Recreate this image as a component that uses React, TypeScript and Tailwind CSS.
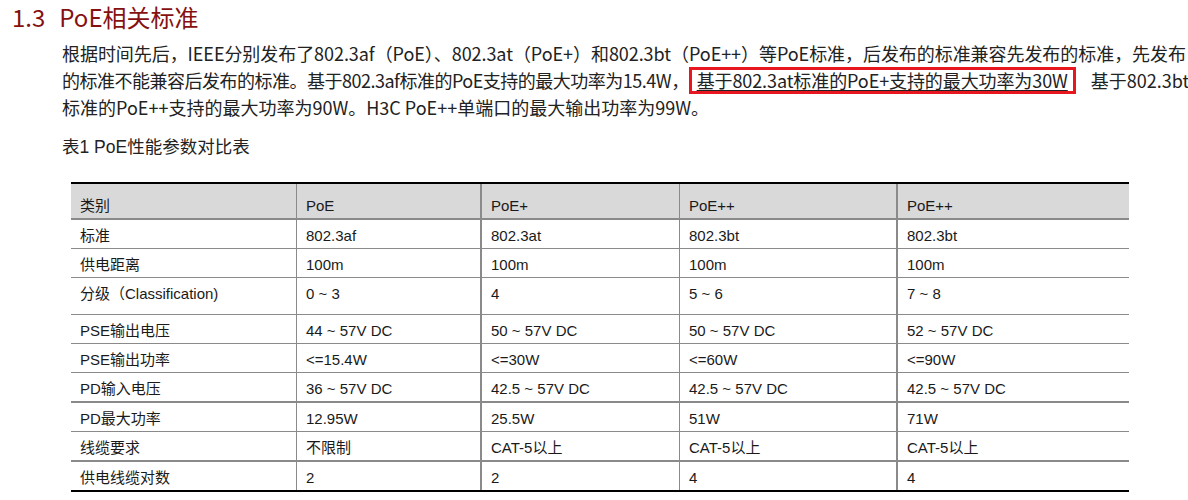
import React from 'react';

const COL_W = ['w-[225px]', 'w-[184px]', 'w-[199px]', 'w-[217px]', 'w-[233px]'];
const COL_B = ['', 'border-l', 'border-l-2', 'border-l', 'border-l-2'];

interface Row {
  cells: string[];
  h: string;
  line: string;
}

const HEADER = ['类别', 'PoE', 'PoE+', 'PoE++', 'PoE++'];

const ROWS: Row[] = [
  { cells: ['标准', '802.3af', '802.3at', '802.3bt', '802.3bt'], h: 'h-[29px]', line: 'border-b' },
  { cells: ['供电距离', '100m', '100m', '100m', '100m'], h: 'h-[29px]', line: 'border-b' },
  { cells: ['分级（Classification)', '0 ~ 3', '4', '5 ~ 6', '7 ~ 8'], h: 'h-[37px]', line: 'border-b' },
  { cells: ['PSE输出电压', '44 ~ 57V DC', '50 ~ 57V DC', '50 ~ 57V DC', '52 ~ 57V DC'], h: 'h-[29px]', line: 'border-b' },
  { cells: ['PSE输出功率', '<=15.4W', '<=30W', '<=60W', '<=90W'], h: 'h-[29px]', line: 'border-b' },
  { cells: ['PD输入电压', '36 ~ 57V DC', '42.5 ~ 57V DC', '42.5 ~ 57V DC', '42.5 ~ 57V DC'], h: 'h-[30px]', line: 'border-b-2' },
  { cells: ['PD最大功率', '12.95W', '25.5W', '51W', '71W'], h: 'h-[29px]', line: 'border-b' },
  { cells: ['线缆要求', '不限制', 'CAT-5以上', 'CAT-5以上', 'CAT-5以上'], h: 'h-[30px]', line: 'border-b-2' },
  { cells: ['供电线缆对数', '2', '2', '4', '4'], h: 'h-[28px]', line: '' },
];

const PoeTable: React.FC = () => {
  return (
    <div className="ml-[71px] mt-[23px] w-[1058px] border-t-2 border-b-2 border-black font-['Liberation_Sans','Noto_Sans_CJK_SC',sans-serif] text-[15px] leading-[20px] text-[#1a1a1a]">
      <div className="flex h-[36px] border-b-2 border-[#8a8a8a] bg-[#d9d9d9]">
        {HEADER.map((text, i) => (
          <div key={i} className={`${COL_W[i]} ${COL_B[i]} border-[#8a8a8a] pl-[9px] pt-[12px]`}>
            {text}
          </div>
        ))}
      </div>
      {ROWS.map((row, r) => (
        <div key={r} className={`flex ${row.h} ${row.line} border-[#8a8a8a]`}>
          {row.cells.map((text, i) => (
            <div key={i} className={`${COL_W[i]} ${COL_B[i]} border-[#8a8a8a] pl-[9px] pt-[6px] whitespace-nowrap`}>
              {text}
            </div>
          ))}
        </div>
      ))}
    </div>
  );
};

export default function App() {
  return (
    <div className="w-[1188px] h-[500px] overflow-hidden bg-white font-['Noto_Sans_CJK_SC',sans-serif]">
      <h2 className="pl-[12px] text-[24px] leading-[34px] text-[#861010] whitespace-nowrap">
        <span className="mr-[14px]">1.3</span>PoE相关标准
      </h2>

      <div className="mt-[6px] pl-[62px] text-[18px] leading-[27px] text-[#222] whitespace-nowrap">
        <div className="tracking-[-0.06px]">根据时间先后，IEEE分别发布了802.3af（PoE）、802.3at（PoE+）和802.3bt（PoE++）等PoE标准，后发布的标准兼容先发布的标准，先发布</div>
        <div className="flex items-center">
          <span className="tracking-[-0.5px]">的标准不能兼容后发布的标准。基于802.3af标准的PoE支持的最大功率为15.4W，</span>
          <span className="inline-block h-[27px] border-[3px] border-[#e8161f] px-[5px] leading-[21px] underline decoration-1 underline-offset-2 tracking-[-0.1px]">
            基于802.3at标准的PoE+支持的最大功率为30W
          </span>
          <span className="ml-[15px]">基于802.3bt</span>
        </div>
        <div>标准的PoE++支持的最大功率为90W。H3C PoE++单端口的最大输出功率为99W。</div>
      </div>

      <p className="mt-[14px] pl-[62px] font-['Liberation_Sans','Noto_Sans_CJK_SC',sans-serif] text-[17.5px] leading-[24px] text-[#222]">
        表1 PoE性能参数对比表
      </p>

      <PoeTable />
    </div>
  );
}
